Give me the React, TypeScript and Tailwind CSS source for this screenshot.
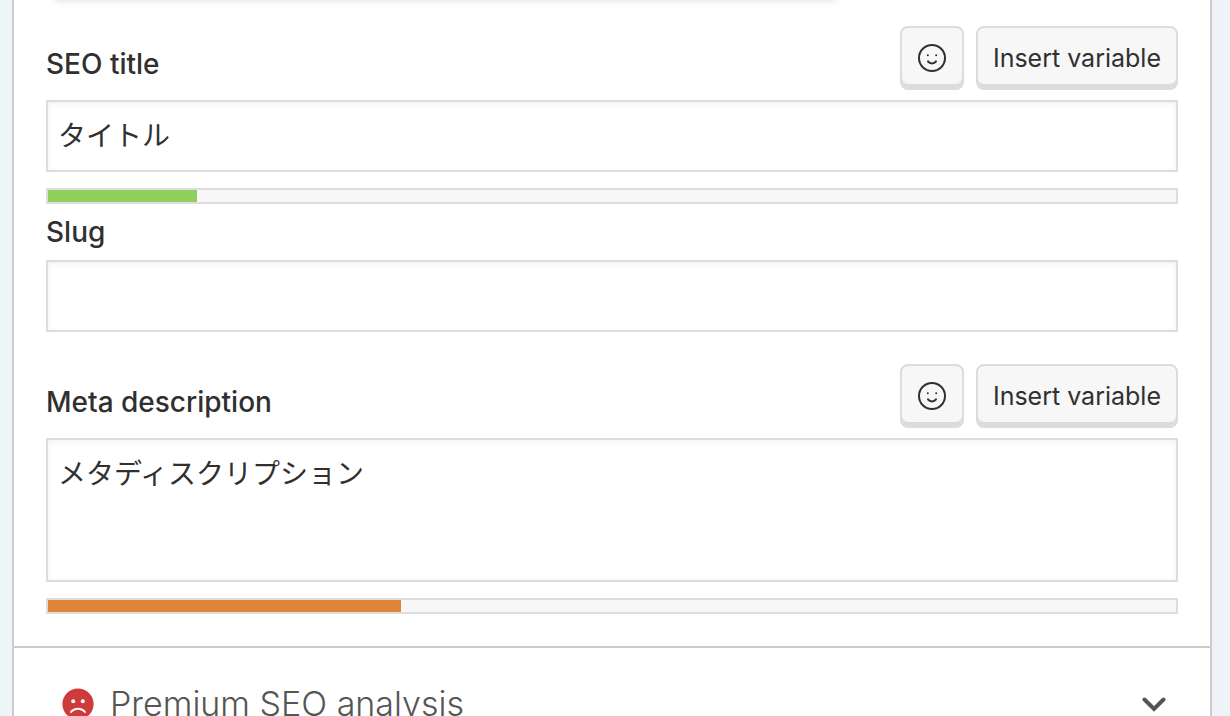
import { useId, useState } from 'react';

function SmileIcon() {
  return (
    <svg viewBox="0 0 28 28" className="size-7" fill="none" aria-hidden="true">
      <circle cx="14" cy="14" r="13" stroke="currentColor" strokeWidth="2" />
      <circle cx="9.8" cy="11.2" r="1" fill="currentColor" />
      <circle cx="18.2" cy="11.2" r="1" fill="currentColor" />
      <path d="M10 17.400c.9 1.300 2.300 2 4 2s3.100-.7 4-2" stroke="currentColor" strokeWidth="2" strokeLinecap="round" />
    </svg>
  );
}

function SadIcon() {
  return (
    <svg viewBox="0 0 32 32" className="size-8" fill="none" aria-hidden="true">
      <circle cx="16" cy="16" r="15.6" fill="#cf3b3b" />
      <circle cx="11.2" cy="13.2" r="2" fill="#fff" />
      <circle cx="20.8" cy="13.2" r="2" fill="#fff" />
      <path d="M9 24c1.600-2 4.200-3.200 7-3.200s5.400 1.200 7 3.200" stroke="#fff" strokeWidth="2" strokeLinecap="round" />
    </svg>
  );
}

const buttonClass =
  'flex h-16 items-center justify-center rounded-lg border-2 border-[#dcdcdc] bg-[#f7f7f7] shadow-[inset_0_-4px_0_#dcdcdc]';
const fieldClass =
  'block w-full border-2 border-[#dddddd] bg-white px-2.5 text-[28px] shadow-[inset_0_2px_6px_rgba(0,0,0,0.06)] outline-none';

interface FieldHeaderProps {
  id: string;
  label: string;
}

function FieldHeader({ id, label }: FieldHeaderProps) {
  return (
    <div className="mb-2.5 flex items-end justify-between">
      <label htmlFor={id} className="text-[28px] leading-[52px] font-medium">
        {label}
      </label>
      <div className="flex gap-3">
        <button type="button" aria-label="Insert emoji" className={`${buttonClass} w-16`}>
          <SmileIcon />
        </button>
        <button type="button" className={`${buttonClass} px-[15px] pt-0.5 text-[25px]`}>
          Insert variable
        </button>
      </div>
    </div>
  );
}

function LengthBar({ percent, color }: { percent: number; color: string }) {
  return (
    <div className="mt-4 h-4 border-2 border-[#dddddd] bg-[#f7f7f7]">
      <div className="h-full" style={{ width: `${percent}%`, backgroundColor: color }} />
    </div>
  );
}

export default function App() {
  const id = useId();
  const [title, setTitle] = useState('タイトル');
  const [slug, setSlug] = useState('');
  const [description, setDescription] = useState('メタディスクリプション');

  return (
    <div className="h-screen overflow-hidden bg-linear-to-r from-[#eef5f6] to-[#eff3f8] pr-[18px] pl-3 font-['Inter','Noto_Sans_CJK_JP',sans-serif] text-[#303030]">
      <main className="min-h-full border-x-2 border-[#cccccc] bg-white">
        <div className="px-8 pb-8">
          {/* Bottom edge of the snippet preview card */}
          <div className="-mt-4 mb-[26px] ml-2 h-4 w-[69%] shadow-[0_0_8px_rgba(0,0,0,0.15)]" />

          <FieldHeader id={`${id}-title`} label="SEO title" />
          <input
            id={`${id}-title`}
            type="text"
            value={title}
            onChange={(e) => setTitle(e.target.value)}
            className={`${fieldClass} h-[72px] pb-1`}
          />
          <LengthBar percent={13.25} color="#8fcf5a" />

          <label htmlFor={`${id}-slug`} className="block text-[28px] leading-[56px] font-medium">
            Slug
          </label>
          <input
            id={`${id}-slug`}
            type="text"
            value={slug}
            onChange={(e) => setSlug(e.target.value)}
            className={`${fieldClass} mb-8 h-[72px] pb-1`}
          />

          <FieldHeader id={`${id}-description`} label="Meta description" />
          <textarea
            id={`${id}-description`}
            value={description}
            onChange={(e) => setDescription(e.target.value)}
            className={`${fieldClass} h-36 resize-none py-3.5 leading-10`}
          />
          <LengthBar percent={31.3} color="#dd8439" />
        </div>

        <button
          type="button"
          aria-expanded="false"
          className="flex w-full items-center border-t-2 border-[#cccccc] px-12 py-8 text-left text-[#555555]"
        >
          <SadIcon />
          <span className="ml-4 flex-1 text-[34px] leading-[48px] font-[350]">Premium SEO analysis</span>
          <svg viewBox="0 0 24 16" className="-mr-1 h-4 w-6" fill="none" aria-hidden="true">
            <path d="M2.500 3.500l9.500 9.500 9.500-9.500" stroke="currentColor" strokeWidth="4" strokeLinecap="round" />
          </svg>
        </button>
      </main>
    </div>
  );
}
